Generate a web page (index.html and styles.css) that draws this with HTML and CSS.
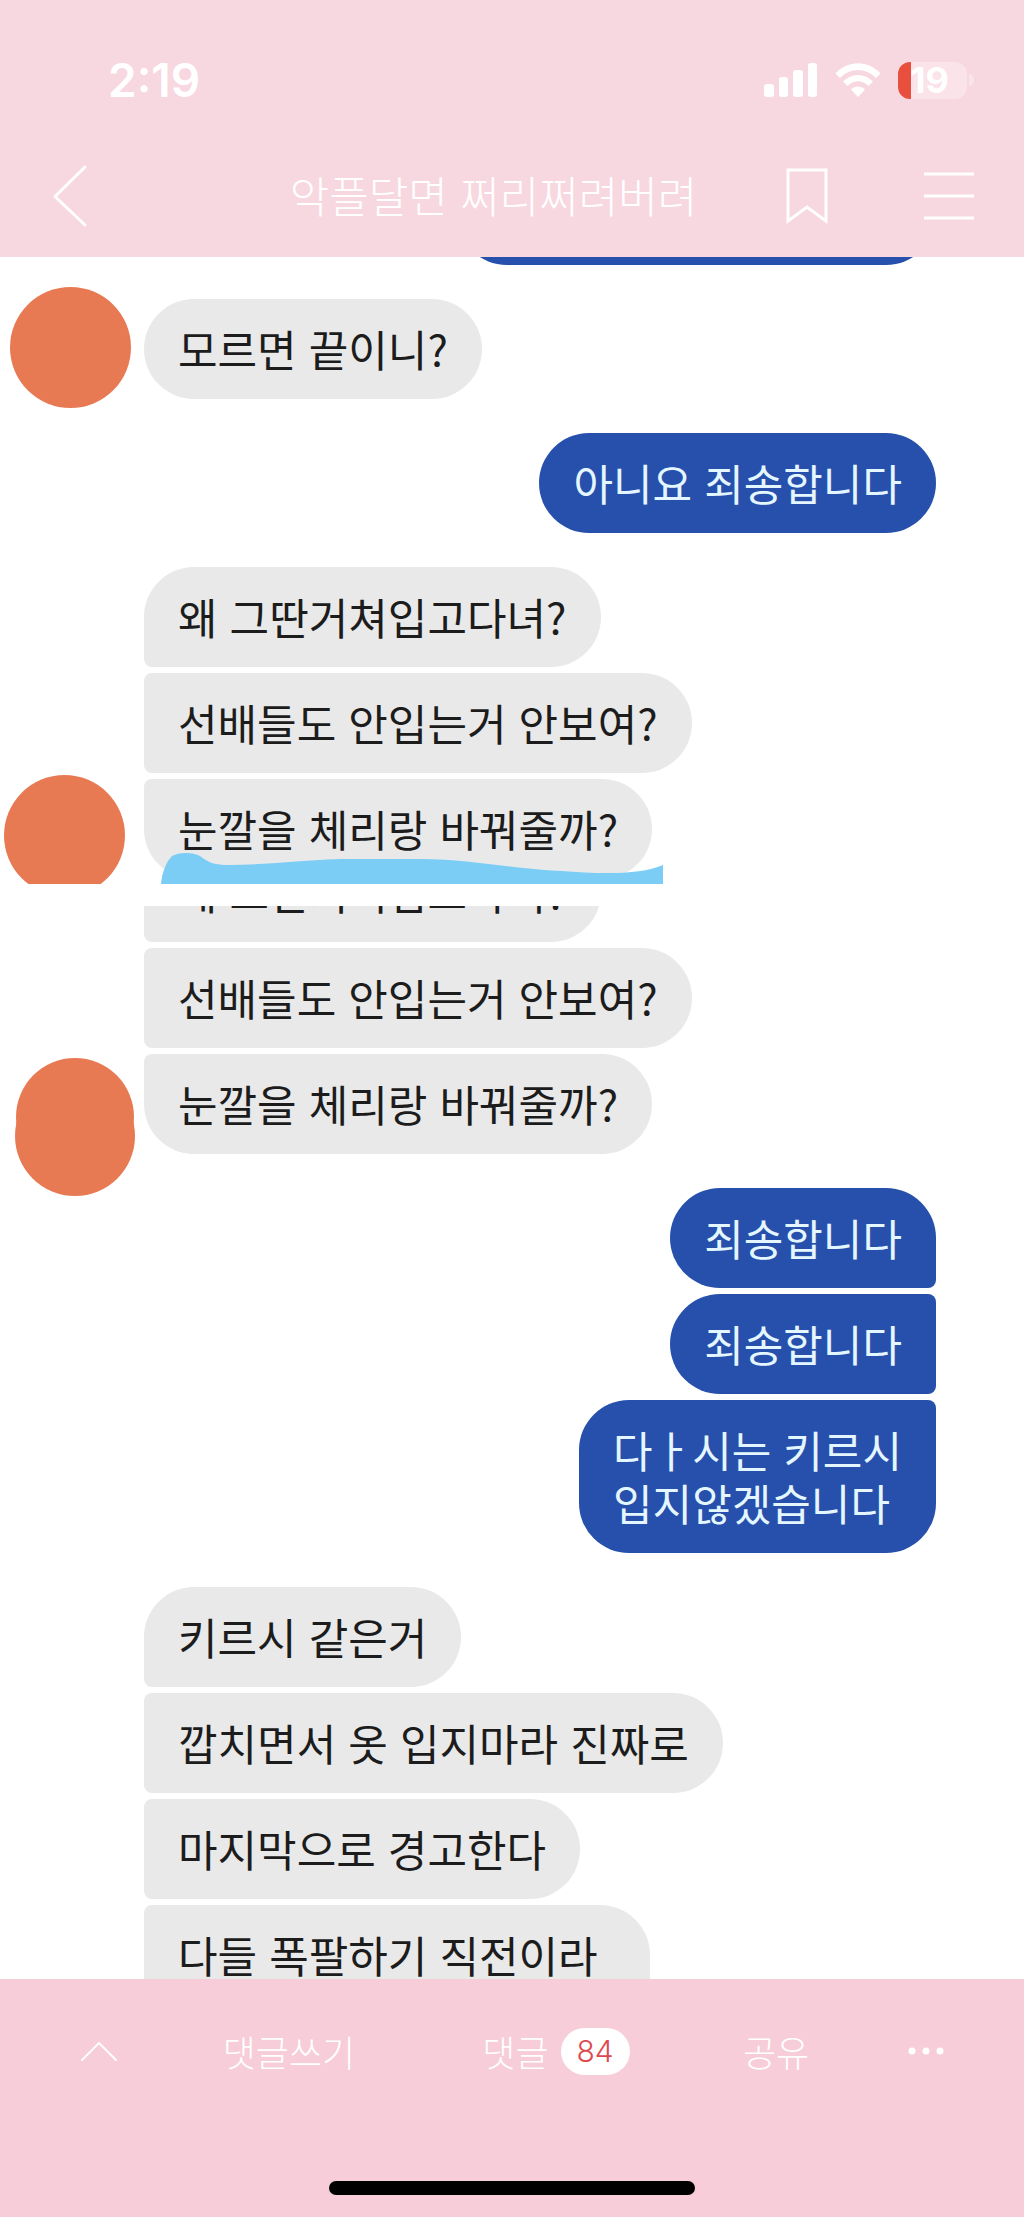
FILE: index.html
```html
<!DOCTYPE html>
<html lang="ko">
<head>
<meta charset="utf-8">
<meta name="viewport" content="width=device-width, initial-scale=1">
<title>악플달면 쩌리쩌려버려</title>
<link rel="stylesheet" href="styles.css">
</head>
<body>
<div class="app">
  <header class="header">
    <div class="status">
      <span class="status-time">2:19</span>
      <div class="status-icons">
        <svg width="54" height="34" viewBox="0 0 54 34" fill="#fff" aria-hidden="true">
          <rect x="0" y="21" width="10" height="13" rx="3"/>
          <rect x="15" y="14" width="9" height="20" rx="3"/>
          <rect x="29" y="7" width="10" height="27" rx="3"/>
          <rect x="44" y="0" width="9" height="34" rx="3"/>
        </svg>
        <svg width="46" height="34" viewBox="0 0 46 34" fill="#fff" aria-hidden="true">
          <path d="M.5 10.500C13-3.200 33-3.200 45.500 10.500L41 15C31 4.200 15 4.200 5 15Z"/>
          <path d="M8 18.500C16.500 9.800 29.500 9.800 38 18.500L33.500 23C27.500 16.600 18.500 16.600 12.500 23Z"/>
          <path d="M16 26.500C20 22.500 26 22.500 30 26.500L23 34Z"/>
        </svg>
        <span class="battery"><span class="battery-level">19</span></span>
      </div>
    </div>
    <nav class="nav">
      <a class="icon-link" href="#back" aria-label="뒤로">
        <svg width="34" height="62" viewBox="0 0 34 62" fill="none" stroke="#fff" stroke-width="3" stroke-linecap="round" stroke-linejoin="round"><path d="M32 2 2 31.500 32 60"/></svg>
      </a>
      <h1 class="title">악플달면 쩌리쩌려버려</h1>
      <button class="icon-button" type="button" aria-label="북마크">
        <svg width="42" height="56" viewBox="0 0 42 56" fill="none" stroke="#fff" stroke-width="3"><path d="M2 2H40V53L21 39 2 53Z"/></svg>
      </button>
      <button class="icon-button" type="button" aria-label="메뉴">
        <svg width="50" height="50" viewBox="0 0 50 50" fill="none" stroke="#fff" stroke-width="3"><path d="M0 3H50M0 25H50M0 47H50"/></svg>
      </button>
    </nav>
  </header>

  <main class="content">
    <section class="capture capture-first">
      <div class="group sent"><div class="bubble bubble-empty"></div></div>
      <div class="row">
        <span class="avatar"></span>
        <div class="group"><p class="bubble">모르면 끝이니?</p></div>
      </div>
      <div class="group sent"><p class="bubble">아니요 죄송합니다</p></div>
      <div class="row">
        <span class="avatar avatar-low"></span>
        <div class="group">
          <p class="bubble">왜 그딴거쳐입고다녀?</p>
          <p class="bubble">선배들도 안입는거 안보여?</p>
          <p class="bubble">눈깔을 체리랑 바꿔줄까?</p>
        </div>
      </div>
      <svg class="marker" width="502" height="32" viewBox="0 0 502 32" fill="#7bcdf6" aria-hidden="true">
        <path d="M0 32C1 21 5 10 11 4C18 0 32 0 39 4C48 11 54 13 68 13C100 13 130 9 180 7H260C310 7 350 17 400 19C440 22 480 23 502 13V32Z"/>
      </svg>
    </section>

    <section class="capture capture-second">
      <div class="row">
        <svg class="avatar-double" width="120" height="140" viewBox="0 0 120 140" fill="#e87a53" aria-hidden="true">
          <circle cx="60" cy="60" r="59"/><circle cx="60" cy="79" r="60"/>
        </svg>
        <div class="group">
          <p class="bubble">왜 그딴거쳐입고다녀?</p>
          <p class="bubble">선배들도 안입는거 안보여?</p>
          <p class="bubble">눈깔을 체리랑 바꿔줄까?</p>
        </div>
      </div>
      <div class="group sent">
        <p class="bubble">죄송합니다</p>
        <p class="bubble">죄송합니다</p>
        <p class="bubble">다ㅏ시는 키르시<br>입지않겠습니다</p>
      </div>
      <div class="row">
        <div class="group">
          <p class="bubble">키르시 같은거</p>
          <p class="bubble">깝치면서 옷 입지마라 진짜로</p>
          <p class="bubble">마지막으로 경고한다</p>
          <p class="bubble bubble-long">다들 폭팔하기 직전이라</p>
        </div>
      </div>
    </section>
  </main>

  <footer class="footer">
    <div class="actions">
      <a class="action" href="#top" aria-label="맨 위로">
        <svg width="36" height="20" viewBox="0 0 36 20" fill="none" stroke="#fff" stroke-width="2" stroke-linecap="round" stroke-linejoin="round"><path d="M1 19 18 2 35 19"/></svg>
      </a>
      <button class="action" type="button">댓글쓰기</button>
      <button class="action" type="button">댓글 <span class="count">84</span></button>
      <button class="action" type="button">공유</button>
      <button class="action action-more" type="button" aria-label="더보기">
        <svg width="36" height="8" viewBox="0 0 36 8" fill="#fff"><circle cx="4" cy="4" r="3.500"/><circle cx="18" cy="4" r="3.500"/><circle cx="32" cy="4" r="3.500"/></svg>
      </button>
    </div>
    <div class="home-bar"></div>
  </footer>
</div>
</body>
</html>
```

FILE: styles.css
```css
* {
  box-sizing: border-box;
}

body {
  margin: 0;
  background: #fff;
  color: #1c1c1c;
  font-family: "Noto Sans CJK KR", sans-serif;
}

.app {
  display: flex;
  flex-direction: column;
  height: 100vh;
}

/* Header */

.header {
  flex: none;
  padding: 52px 50px 29px 53px;
  background: #f8d8e0;
  color: #fff;
}

.status {
  display: flex;
  align-items: center;
  justify-content: space-between;
  height: 56px;
  padding-left: 55px;
}

.status-time {
  font: 600 46px/56px Inter, sans-serif;
}

.status-icons {
  display: flex;
  align-items: center;
  gap: 17px;
}

.battery {
  display: flex;
  align-items: center;
}

.battery::after {
  content: "";
  width: 5px;
  height: 12px;
  margin-left: 2px;
  border-radius: 0 6px 6px 0;
  background: #fae3e9;
}

.battery-level {
  width: 69px;
  padding-left: 12px;
  border-radius: 12px;
  background: linear-gradient(to right, #e94f3d 13px, #fae3e9 13px);
  font: 700 36px/37px Inter, sans-serif;
}

.nav {
  display: flex;
  align-items: center;
  height: 64px;
  margin-top: 56px;
}

.title {
  flex: 1;
  margin: 0;
  padding: 0 0 4px 114px;
  font-size: 43px;
  font-weight: 300;
  line-height: 60px;
  text-align: center;
}

.icon-link,
.icon-button {
  display: flex;
  padding: 0;
  border: 0;
  background: none;
}

.icon-button + .icon-button {
  margin-left: 96px;
}

/* Conversation */

.content {
  flex: 1;
  min-height: 0;
  overflow: hidden;
}

.capture {
  position: relative;
  display: flex;
  flex-direction: column;
  gap: 34px;
  overflow: hidden;
}

.capture-first {
  padding-bottom: 5px;
}

.capture-first > :first-child {
  margin-top: -92px;
}

.capture-second {
  margin-top: 22px;
}

.capture-second > :first-child {
  margin-top: -64px;
}

.row {
  display: flex;
}

.row > .group {
  margin-left: auto;
  width: calc(100% - 144px);
}

.group {
  display: flex;
  flex-direction: column;
  align-items: flex-start;
  gap: 6px;
}

.sent {
  align-items: flex-end;
  padding-right: 88px;
}

.bubble {
  margin: 0;
  padding: 23px 34px 24px;
  border-radius: 8px 50px 50px 8px;
  background: #e9e9e9;
  font-size: 43px;
  font-weight: 400;
  line-height: 53px;
}

.bubble:first-child {
  border-top-left-radius: 50px;
}

.bubble:last-child {
  border-bottom-left-radius: 50px;
}

.sent .bubble {
  border-radius: 50px 8px 8px 50px;
  background: #2650ab;
  color: #e4f6ff;
}

.sent .bubble:first-child {
  border-top-right-radius: 50px;
}

.sent .bubble:last-child {
  border-bottom-right-radius: 50px;
}

.bubble-empty {
  width: 479px;
  height: 100px;
}

.bubble-long {
  padding-right: 52px;
  padding-bottom: 76px;
}

.avatar {
  flex: none;
  width: 121px;
  height: 121px;
  margin: -12px 0 -12px 10px;
  border-radius: 50%;
  background: #e87a53;
}

.avatar-low {
  align-self: flex-end;
  margin: 0 0 -17px 4px;
}

.avatar-double {
  flex: none;
  align-self: flex-end;
  margin: 0 0 -43px 15px;
}

.marker {
  position: absolute;
  bottom: 0;
  left: 161px;
}

/* Bottom bar */

.footer {
  display: flex;
  flex: none;
  flex-direction: column;
  align-items: center;
  padding: 48px 0 22px;
  background: #f7cdd9;
}

.actions {
  display: grid;
  grid-template-columns: 198fr 182fr 352fr 88fr 204fr;
  width: 100%;
}

.action {
  display: flex;
  align-items: center;
  justify-content: center;
  gap: 12px;
  height: 48px;
  padding: 0;
  border: 0;
  background: none;
  color: #fff;
  font: 300 36px/48px "Noto Sans CJK KR", sans-serif;
  white-space: nowrap;
}

.action-more {
  padding-left: 8px;
}

.count {
  padding: 0 16px;
  border-radius: 24px;
  background: #fff;
  color: #dc4a50;
  font: 300 30px/47px Inter, sans-serif;
}

.home-bar {
  width: 366px;
  max-width: 60%;
  height: 14px;
  margin-top: 106px;
  border-radius: 7px;
  background: #000;
}
```
